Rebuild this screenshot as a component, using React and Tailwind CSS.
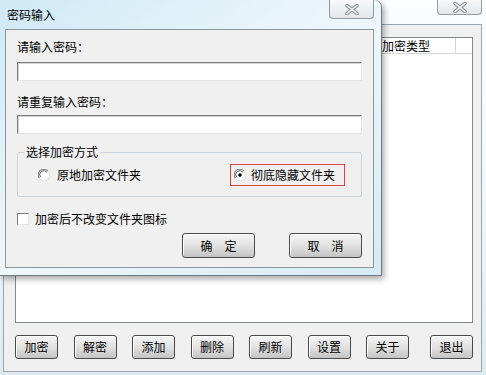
import React from "react";

const cn = "font-['SimSun','Noto_Sans_CJK_SC',sans-serif]";

function CloseX({ w, h }) {
  return (
    <div
      className={`flex items-center justify-center rounded-b-[4px] border border-t-0 border-[#8f9aa3] bg-gradient-to-b from-[#f7f9fa] to-[#e3e8ec] ${w} ${h}`}
    >
      <svg width="14" height="11" viewBox="0 0 14 11">
        <path d="M2 1.5 L12 9.5 M12 1.5 L2 9.5" stroke="#8a8f94" strokeWidth="3.6" strokeLinecap="round" />
        <path d="M2 1.5 L12 9.5 M12 1.5 L2 9.5" stroke="#ffffff" strokeWidth="1.6" strokeLinecap="round" />
      </svg>
    </div>
  );
}

function WinButton({ children, className = "" }) {
  return (
    <button
      className={`flex items-center justify-center rounded-[3px] border border-[#4a4a4a] bg-gradient-to-b from-[#f6f6f6] via-[#e2e2e2] to-[#c4c4c4] text-[12px] leading-none text-black shadow-[inset_1px_1px_0_#ffffff] ${className}`}
    >
      {children}
    </button>
  );
}

function Radio({ checked }) {
  return (
    <svg width="12" height="12" viewBox="0 0 12 12">
      <circle cx="6" cy="6" r="5" fill="#ffffff" />
      <path d="M10 2.2 A5.2 5.2 0 0 0 1.5 9.2" fill="none" stroke="#8c8c8c" strokeWidth="1.2" />
      <path d="M9 3.2 A4 4 0 0 0 2.6 8.2" fill="none" stroke="#5a5a5a" strokeWidth="1" />
      <path d="M1.8 9.8 A5.2 5.2 0 0 0 10.4 2.6" fill="none" stroke="#e6e6e6" strokeWidth="1.2" />
      {checked && <circle cx="6" cy="6" r="1.8" fill="#000000" />}
    </svg>
  );
}

function TextBox() {
  return (
    <div className="h-[19px] w-full border border-t-[#7c7c7c] border-l-[#7c7c7c] border-r-[#e4e4e4] border-b-[#e4e4e4] bg-white shadow-[inset_1px_1px_0_#d4d4d4]" />
  );
}

export default function App() {
  const mainButtons = ["加密", "解密", "添加", "删除", "刷新", "设置", "关于"];

  return (
    <div className={`relative h-[375px] w-[486px] overflow-hidden bg-gradient-to-b from-[#fbfdfe] via-[#f1f7fa] to-[#dcebf2] ${cn}`}>
      {/* main window */}
      <div className="flex h-full flex-col">
        <div className="flex h-[24px] justify-end pr-[4px]">
          <CloseX w="w-[45px]" h="h-[15px]" />
        </div>
        <div className="mb-[3px] ml-[3px] mr-[4px] flex flex-1 flex-col border border-[#9fa4a8] bg-[#f0f0f0] pl-[11px] pt-[12px]">
          <div className="flex h-[286px] w-[458px] flex-col border border-[#828790] bg-white">
            <div className="flex h-[16px] border-b border-[#d5d5d5] text-[12px] leading-[15px] text-black">
              <div className="w-[365px] border-r border-[#d5d5d5]" />
              <div className="w-[75px] border-r border-[#d5d5d5] pl-[1px]">加密类型</div>
              <div className="flex-1" />
            </div>
          </div>
          <div className="mt-[12px] flex w-[458px] gap-[15.5px]">
            {mainButtons.map((b) => (
              <WinButton key={b} className="h-[24px] w-[43px]">{b}</WinButton>
            ))}
            <WinButton className="ml-auto h-[24px] w-[43px]">退出</WinButton>
          </div>
        </div>
      </div>

      {/* password dialog */}
      <div className="absolute left-0 top-0 flex h-[276px] w-[382px] flex-col rounded-tr-[7px] border-r border-b border-[#6f7b83] bg-gradient-to-br from-[#cfe9f5] via-[#eef7fb] to-[#d6ebf4] pb-[7px] pl-[5px] pr-[7px] shadow-[2px_3px_6px_rgba(0,0,0,0.35)]">
        <div className="flex h-[29px] items-start justify-between">
          <div className="pl-[2px] pt-[8px] text-[12px] leading-[14px] text-black">密码输入</div>
          <CloseX w="w-[45px]" h="h-[19px]" />
        </div>
        <div className="flex flex-1 flex-col border border-[#8a959c] bg-[#f0f0f0] px-[11px] text-[12px] leading-[14px] text-black">
          <div className="mt-[10px]">请输入密码：</div>
          <div className="mt-[8px]"><TextBox /></div>
          <div className="mt-[14px]">请重复输入密码：</div>
          <div className="mt-[6px]"><TextBox /></div>
          <fieldset className="mt-[11px] h-[52px] rounded-[2px] border border-[#cdd3d7] px-0 pb-0">
            <legend className="ml-[6px] px-[2px] text-[12px] leading-[14px]">选择加密方式</legend>
            <div className="flex items-center pt-[5px]">
              <div className="ml-[20px] flex items-center gap-[7px]">
                <Radio />
                <span>原地加密文件夹</span>
              </div>
              <div className="ml-auto mr-[16px] flex h-[22px] w-[115px] items-center gap-[5px] border border-[#d9434e] pl-[3px]">
                <Radio checked />
                <span>彻底隐藏文件夹</span>
              </div>
            </div>
          </fieldset>
          <div className="mt-[15px] flex items-center gap-[6px]">
            <div className="h-[12px] w-[12px] border border-t-[#7c7c7c] border-l-[#7c7c7c] border-r-[#e4e4e4] border-b-[#e4e4e4] bg-white" />
            <span>加密后不改变文件夹图标</span>
          </div>
          <div className="mt-[7px] flex justify-end gap-[34px]">
            <WinButton className="h-[25px] w-[73px] gap-[12px]"><span>确</span><span>定</span></WinButton>
            <WinButton className="h-[25px] w-[73px] gap-[12px]"><span>取</span><span>消</span></WinButton>
          </div>
        </div>
      </div>
    </div>
  );
}
